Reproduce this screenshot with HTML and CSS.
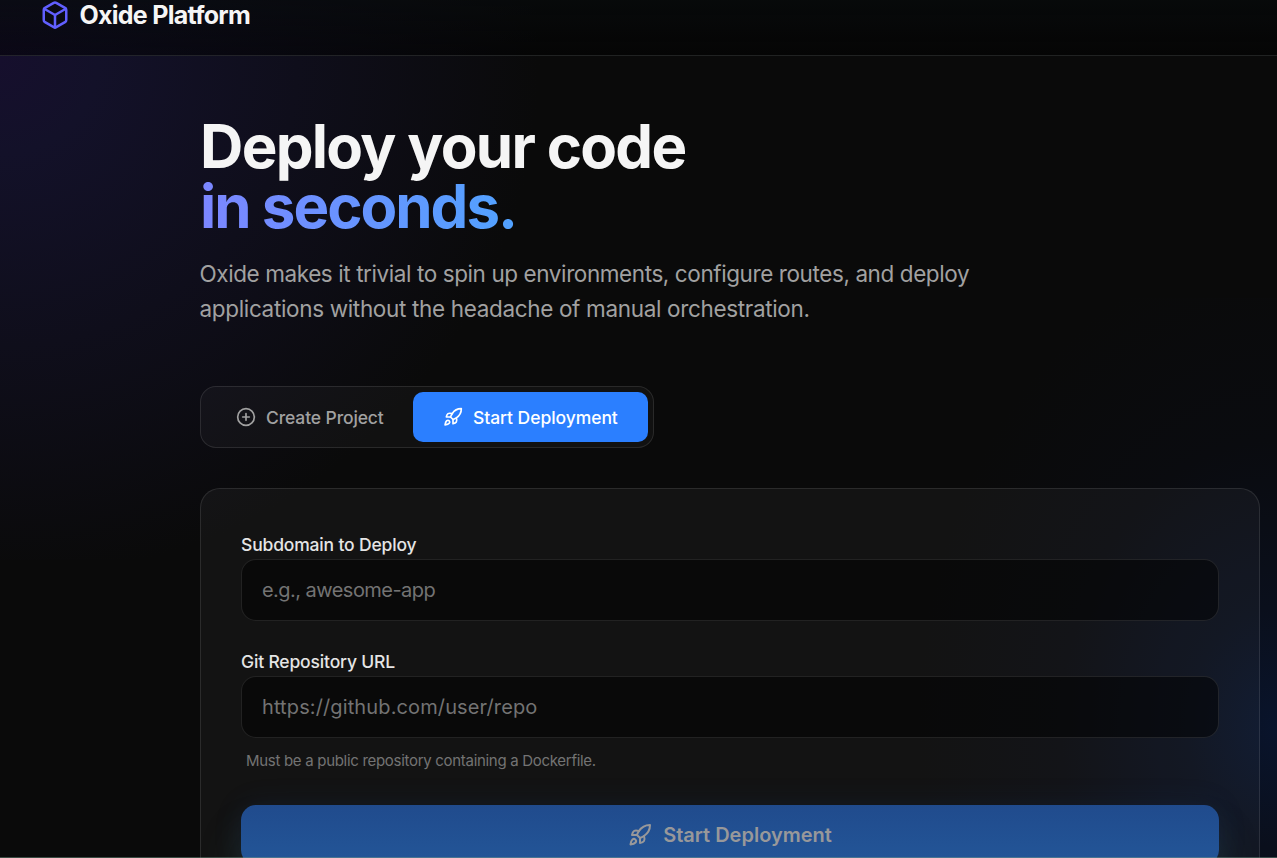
FILE: index.html
```html
<!DOCTYPE html>
<html lang="en">
<head>
    <meta charset="UTF-8">
    <meta name="viewport" content="width=device-width, initial-scale=1.0">
    <title>Oxide Platform</title>
    <link rel="stylesheet" href="styles.css">
</head>
<body>
    <div class="glow glow-indigo"></div>
    <div class="glow glow-blue"></div>

    <header class="header">
        <svg class="logo" viewBox="0 0 24 24">
            <path d="M21 8a2 2 0 0 0-1-1.73l-7-4a2 2 0 0 0-2 0l-7 4A2 2 0 0 0 3 8v8a2 2 0 0 0 1 1.73l7 4a2 2 0 0 0 2 0l7-4A2 2 0 0 0 21 16Z"/>
            <path d="m3.3 7 8.7 5 8.7-5"/>
            <path d="M12 22V12"/>
        </svg>
        <span class="brand">Oxide Platform</span>
    </header>

    <main class="main">
        <h1 class="title">Deploy your code<br><span class="gradient-text">in seconds.</span></h1>
        <p class="subtitle"><span class="line-first">Oxide makes it trivial to spin up environments, configure routes, and deploy</span><br><span class="line-second">applications without the headache of manual orchestration.</span></p>

        <div class="tabs">
            <button class="tab tab-create">
                <svg class="icon" viewBox="0 0 24 24">
                    <circle cx="12" cy="12" r="10"/>
                    <path d="M8 12h8"/>
                    <path d="M12 8v8"/>
                </svg>
                <span class="tab-label">Create Project</span>
            </button>
            <button class="tab tab-deploy active">
                <svg class="icon" viewBox="0 0 24 24">
                    <path d="M4.5 16.5c-1.5 1.26-2 5-2 5s3.74-.5 5-2c.71-.84.7-2.13-.09-2.91a2.18 2.18 0 0 0-2.91-.09z"/>
                    <path d="m12 15-3-3a22 22 0 0 1 2-3.95A12.88 12.88 0 0 1 22 2c0 2.72-.78 7.5-6 11a22.35 22.35 0 0 1-4 2z"/>
                    <path d="M9 12H4s.55-3.03 2-4c1.62-1.08 5 0 5 0"/>
                    <path d="M12 15v5s3.03-.55 4-2c1.08-1.62 0-5 0-5"/>
                </svg>
                <span class="tab-label">Start Deployment</span>
            </button>
        </div>

        <form class="card">
            <label class="label" for="subdomain">Subdomain to Deploy</label>
            <input class="input input-subdomain" id="subdomain" type="text" placeholder="e.g., awesome-app">

            <label class="label" for="repo">Git Repository URL</label>
            <input class="input input-repo" id="repo" type="text" placeholder="https://github.com/user/repo">
            <p class="hint">Must be a public repository containing a Dockerfile.</p>

            <button class="submit" type="button">
                <svg class="icon" viewBox="0 0 24 24">
                    <path d="M4.5 16.5c-1.5 1.26-2 5-2 5s3.74-.5 5-2c.71-.84.7-2.13-.09-2.91a2.18 2.18 0 0 0-2.91-.09z"/>
                    <path d="m12 15-3-3a22 22 0 0 1 2-3.95A12.88 12.88 0 0 1 22 2c0 2.72-.78 7.5-6 11a22.35 22.35 0 0 1-4 2z"/>
                    <path d="M9 12H4s.55-3.03 2-4c1.62-1.08 5 0 5 0"/>
                    <path d="M12 15v5s3.03-.55 4-2c1.08-1.62 0-5 0-5"/>
                </svg>
                <span>Start Deployment</span>
            </button>
        </form>
    </main>
    <div class="bottom-line"></div>
</body>
</html>
```
FILE: styles.css
```css
* {
    box-sizing: border-box;
    margin: 0;
    padding: 0;
}
body {
    position: relative;
    height: 858px;
    overflow: hidden;
    background: #0a0a0a;
    color: #f5f5f5;
    font-family: Inter, "Liberation Sans", sans-serif;
}
button {
    border: none;
    font-family: inherit;
    cursor: pointer;
}
svg {
    fill: none;
    stroke: currentColor;
    stroke-width: 2;
    stroke-linecap: round;
    stroke-linejoin: round;
}

/* background glows */
.glow {
    position: absolute;
    z-index: -1;
}
.glow-indigo {
    left: 0;
    top: 0;
    width: 560px;
    height: 560px;
    background: radial-gradient(540px 520px at 0 60px, #160f2d, #131129 18%, #0f0e1b 55%, #0a0a0a);
}
.glow-blue {
    right: 0;
    bottom: 0;
    width: 480px;
    height: 560px;
    background: radial-gradient(360px 480px at 480px 430px, #09142c, #0a0f1c 25%, #0a0b0f 60%, #0a0a0a);
}

.header {
    display: flex;
    gap: 9.5px;
    height: 56px;
    padding-left: 40px;
    background: linear-gradient(rgba(6, 9, 10, 0.7), rgba(0, 0, 0, 0.5));
    border-bottom: 1px solid rgba(255, 255, 255, 0.1);
}
.logo {
    width: 30px;
    height: 30px;
    color: #615fff;
}
.brand {
    font-size: 25px;
    font-weight: 700;
    line-height: 31px;
    letter-spacing: -0.74px;
}

.main {
    width: 1060px;
    margin-left: 200px;
    padding-top: 60px;
}
.title {
    font-size: 60px;
    font-weight: 700;
    line-height: 60px;
    letter-spacing: -1.7px;
}
.gradient-text {
    background: linear-gradient(to right, #7c86ff, #51a2ff);
    -webkit-background-clip: text;
    background-clip: text;
    color: transparent;
    letter-spacing: -2px;
}
.subtitle {
    margin-top: 20px;
    margin-left: -0.5px;
    color: #a1a1a1;
    font-size: 22.5px;
    line-height: 35px;
    white-space: nowrap;
}
.line-first {
    letter-spacing: -0.41px;
}
.line-second {
    letter-spacing: -0.34px;
}

.tabs {
    display: flex;
    width: 454px;
    height: 62px;
    margin-top: 60px;
    padding: 5px;
    background: rgba(255, 255, 255, 0.03);
    border: 1px solid rgba(255, 255, 255, 0.1);
    border-radius: 16px;
}
.tab {
    display: flex;
    align-items: center;
    gap: 10px;
    height: 50px;
    background: transparent;
    border-radius: 10px;
    color: #a1a1a1;
    font-size: 17.5px;
    font-weight: 500;
    letter-spacing: -0.12px;
    white-space: nowrap;
}
.tab .icon {
    flex: none;
    width: 20px;
    height: 20px;
}
.tab-create {
    width: 207px;
    padding-left: 30px;
}
.tab-deploy {
    width: 235px;
    padding-left: 30px;
    letter-spacing: -0.06px;
}
.tab.active {
    background: #2b7fff;
    color: #fff;
}

.card {
    height: 370px;
    margin-top: 40px;
    padding: 43px 40px 0;
    overflow: hidden;
    background: rgba(255, 255, 255, 0.04);
    border: 1px solid rgba(255, 255, 255, 0.1);
    border-bottom: none;
    border-radius: 20px 20px 0 0;
}
.label {
    display: block;
    height: 27px;
    color: #e5e5e5;
    font-size: 17.5px;
    font-weight: 500;
    line-height: 25px;
    letter-spacing: -0.17px;
}
.input {
    display: block;
    width: 978px;
    height: 62px;
    margin-bottom: 28px;
    padding: 0 20px;
    background: rgba(0, 0, 0, 0.5);
    border: 1px solid rgba(255, 255, 255, 0.1);
    border-radius: 15px;
    font-family: inherit;
    font-size: 20px;
}
.input::placeholder {
    color: #737373;
}
.input-subdomain {
    letter-spacing: -0.54px;
}
.input-repo {
    margin-bottom: 13px;
    letter-spacing: 0.12px;
}
.hint {
    padding-left: 5px;
    color: #737373;
    font-size: 15px;
    line-height: 20px;
    letter-spacing: -0.3px;
}
.submit {
    display: flex;
    align-items: center;
    justify-content: center;
    gap: 11px;
    width: 978px;
    height: 60px;
    margin-top: 34px;
    background: linear-gradient(#204b8d, #235698);
    border-radius: 15px;
    box-shadow: 0 0 30px rgba(43, 90, 180, 0.12), 0 30px 40px rgba(60, 120, 110, 0.25);
    color: #98989a;
    font-size: 20px;
    font-weight: 600;
}
.submit .icon {
    width: 24px;
    height: 24px;
}

.bottom-line {
    position: absolute;
    left: 0;
    right: 0;
    bottom: 0;
    height: 1px;
    background: rgba(120, 160, 140, 0.45);
}
```
